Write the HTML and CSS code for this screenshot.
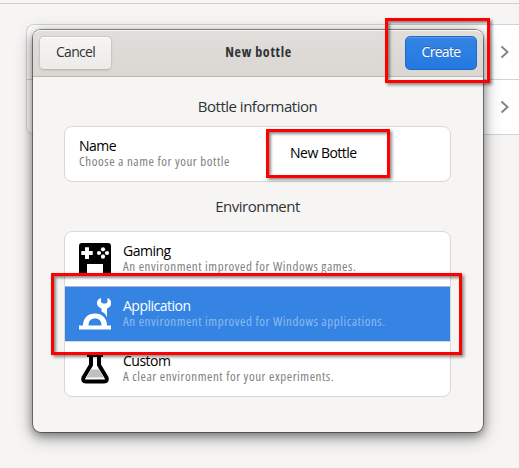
FILE: index.html
```html
<!DOCTYPE html>
<html lang="en">
<head>
<meta charset="utf-8">
<title>New bottle</title>
<link rel="stylesheet" href="styles.css">
</head>
<body>
<div class="window">
  <div class="backdrop-list">
    <div class="backdrop-row"><svg class="chevron" viewBox="0 0 10 14"><path d="M1.500 1.500 7.500 7 1.500 12.500"/></svg></div>
    <div class="backdrop-row"><svg class="chevron" viewBox="0 0 10 14"><path d="M1.500 1.500 7.500 7 1.500 12.500"/></svg></div>
  </div>
</div>
<main class="dialog">
  <header class="headerbar">
    <button class="button">Cancel</button>
    <h1>New bottle</h1>
    <button class="button primary">Create</button>
  </header>
  <div class="content">
    <h2>Bottle information</h2>
    <section class="card">
      <div class="row">
        <div class="labels"><strong>Name</strong><small>Choose a name for your bottle</small></div>
        <div class="entry">New Bottle</div>
      </div>
    </section>
    <h2 class="second">Environment</h2>
    <section class="card environments">
      <div class="row">
        <svg class="icon" viewBox="0 0 32 32"><path d="M3 0H29Q32 0 32 3V32H24V21H8V32H0V3Q0 0 3 0Z"/><path fill="#fff" d="M6 4.300H10V8H13.700V12H10V16H6V12H2.300V8H6Z"/><g fill="#fff"><circle cx="24" cy="6.300" r="2.100"/><circle cx="24" cy="13.700" r="2.100"/><circle cx="20" cy="10" r="2.100"/><circle cx="28" cy="10" r="2.100"/></g></svg>
        <div class="labels"><strong>Gaming</strong><small>An environment improved for Windows games.</small></div>
      </div>
      <div class="row selected">
        <svg class="icon" viewBox="0 0 32 32"><path fill="#fff" fill-rule="evenodd" d="M0 27.500H4C4 20 9 15.500 16 15.500S28 20 28 27.500H32V31.500H0ZM9.500 27.500H22.500C22.500 23 20 20.500 16 20.500S9.500 23 9.500 27.500Z"/><path fill="#fff" d="M22 0C16.500 1.500 16.500 9 22.500 10.500V13.500Q26.500 15 28 19.500V10.500C33.500 9 33.500 1.500 28.500 0V3.500Q28.500 5.500 26.500 5.500H24.500Q22 5.500 22 3.500Z"/></svg>
        <div class="labels"><strong>Application</strong><small>An environment improved for Windows applications.</small></div>
      </div>
      <div class="row">
        <svg class="icon" viewBox="0 0 32 32"><path fill="#fff" stroke="#000" stroke-width="4" stroke-linejoin="round" d="M12 3V12L4.500 24.500Q3 28.500 7 28.500H25Q29 28.500 27.500 24.500L20 12V3"/><path d="M8 0H24V4H8Z"/><path fill="#c0c0c0" d="M12 16.500H20L24.500 24.500H7.500Z"/></svg>
        <div class="labels"><strong>Custom</strong><small>A clear environment for your experiments.</small></div>
      </div>
    </section>
  </div>
</main>
<div class="mark mark-create"></div>
<div class="mark mark-name"></div>
<div class="mark mark-application"></div>
</body>
</html>
```

FILE: styles.css
```css
* { box-sizing: border-box; }
body { margin: 0; width: 519px; height: 468px; overflow: hidden; position: relative; background: #f6f5f4; color: #2e3436; font-family: "Open Sans", "Noto Sans", sans-serif; font-size: 14px; letter-spacing: -.5px; }
.window { height: 465px; border-top: 1px solid #cfcfcd; margin-top: 3px; padding: 20px 0 0 26px; overflow: hidden; }
.backdrop-list { height: 111px; border: 1px solid #d5d3d0; border-right: 0; border-radius: 8px 0 0 8px; background: #fff; }
.backdrop-row { height: 54px; display: flex; align-items: center; padding-left: 473px; }
.backdrop-row + .backdrop-row { height: 55px; border-top: 1px solid #d5d3d0; }
.chevron { width: 10px; height: 14px; fill: none; stroke: #858585; stroke-width: 2; }
.dialog { position: absolute; left: 33px; top: 30px; width: 450px; height: 402px; border-radius: 8px; background: #f6f5f4; box-shadow: 0 0 0 1px rgba(0,0,0,.4), 0 3px 9px 1px rgba(0,0,0,.35), 0 5px 18px 1px rgba(0,0,0,.3); }
.headerbar { height: 47px; display: flex; align-items: center; justify-content: space-between; padding: 0 6px; border-radius: 8px 8px 0 0; border-bottom: 1px solid #bfb8b1; background: linear-gradient(#e1dedb, #dad6d2); box-shadow: inset 0 1px #f8f7f6; }
.button { width: 73px; height: 34px; padding: 0 0 2px; border: 1px solid #cdc7c2; border-bottom-color: #bfb8b1; border-radius: 5px; background: linear-gradient(#f6f5f4, #edebe9); color: #2e3436; font: inherit; letter-spacing: -.7px; line-height: 20px; box-shadow: inset 0 1px #fff, 0 1px 2px rgba(0,0,0,.07); }
.primary { width: 72px; border-color: #1b6acb; background: linear-gradient(#3584e4, #2379e2); color: #fff; box-shadow: inset 0 1px #5b9aeb; text-shadow: 0 -1px rgba(0,0,0,.25); }
h1, h2 { margin: 0; text-align: center; line-height: 20px; white-space: nowrap; }
h1 { font-size: 14px; font-weight: 700; font-stretch: 80%; letter-spacing: .7px; padding-bottom: 2px; }
h2 { font-size: 15px; font-weight: 400; }
.content { padding: 19px 32px 0 31px; }
.card { margin-top: 10px; border: 1px solid #dad7d4; border-radius: 8px; background: #fff; overflow: hidden; }
.environments { margin-top: 15px; }
.second { margin-top: 14px; }
.row { height: 54px; display: flex; align-items: center; padding-left: 14px; }
.row + .row { height: 55px; border-top: 1px solid #dad7d4; }
.row.selected { background: #3584e4; border-top-color: #a8b7cb; color: #fff; }
.icon { width: 32px; height: 32px; margin-right: 12px; flex: none; }
.labels { width: 211px; display: flex; flex-direction: column; align-items: flex-start; white-space: nowrap; padding-bottom: 2px; }
strong { font-weight: 400; font-size: 14px; line-height: 17px; color: #000; }
small { font-size: 13px; font-stretch: 80%; letter-spacing: .55px; line-height: 15px; color: #808080; }
.selected strong { color: #fff; }
.selected small { color: #8dbbee; }
.entry { color: #000; padding-bottom: 3px; }
.mark { position: absolute; border: 3px solid #f00; box-shadow: 2px 2px 3px rgba(0,0,0,.45), inset 2px 2px 3px rgba(0,0,0,.45); }
.mark-create { left: 385px; top: 18px; width: 105px; height: 65px; }
.mark-name { left: 266px; top: 129px; width: 124px; height: 49px; }
.mark-application { left: 51px; top: 273px; width: 411px; height: 82px; }
```
